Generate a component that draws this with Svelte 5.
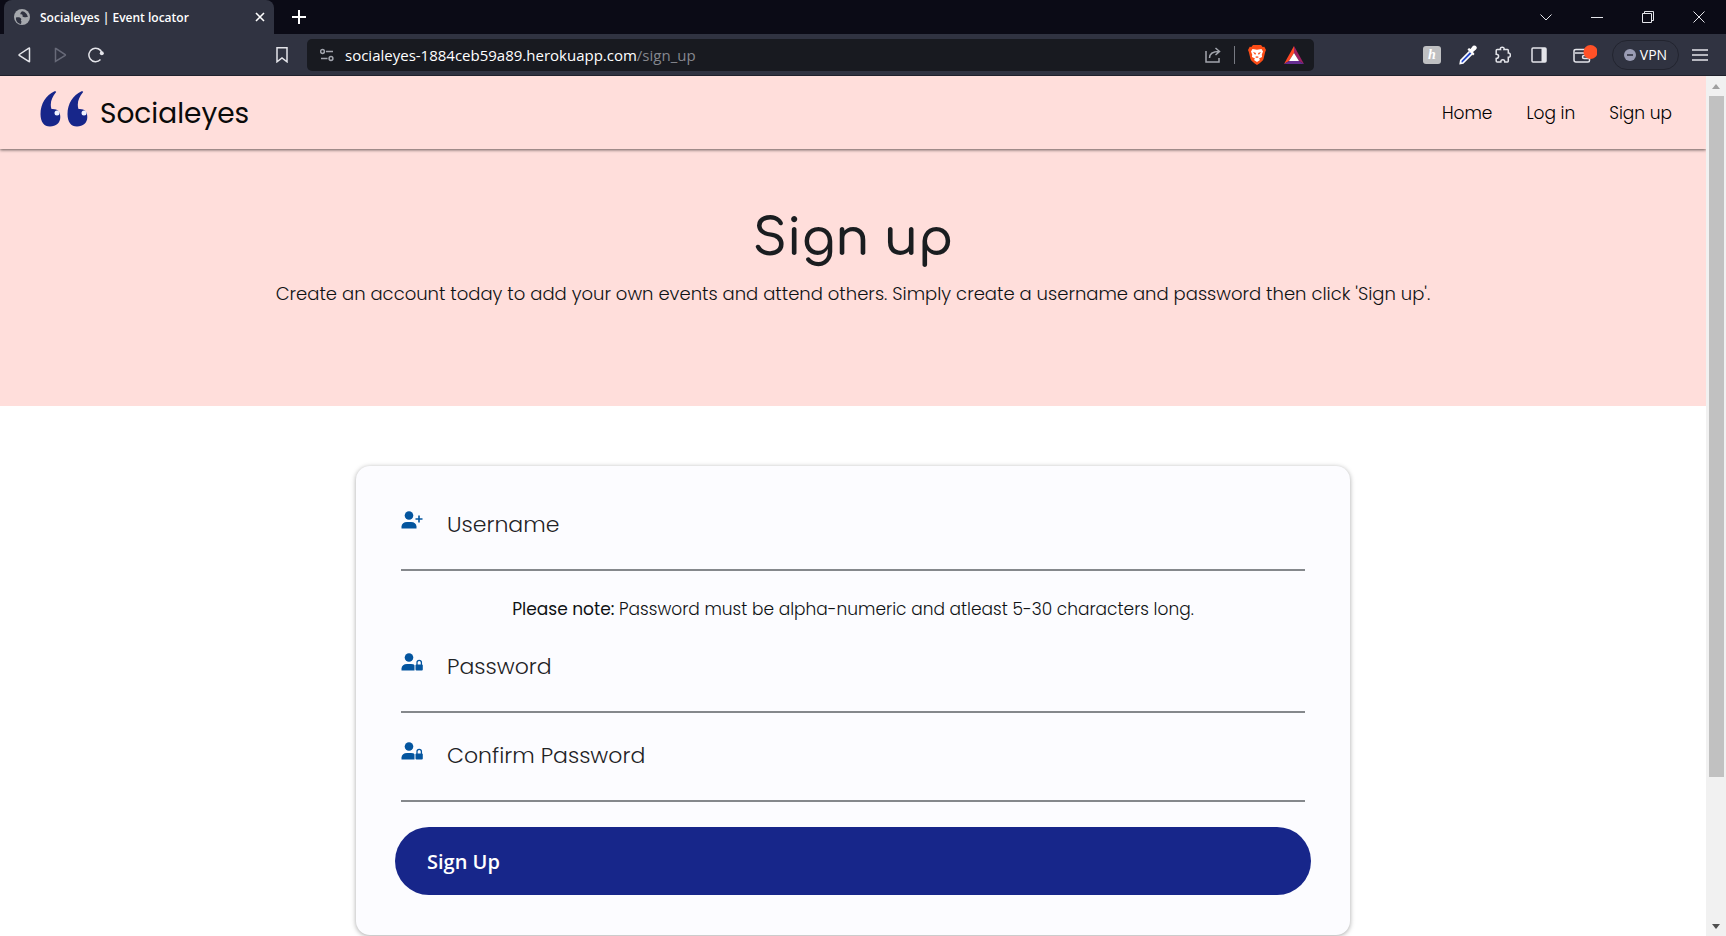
<script>
  const links = ['Home', 'Log in', 'Sign up'];
</script>

<div class="shell">
  <div class="tabs">
    <div class="tab">
      <svg class="globe" viewBox="0 0 16 16" width="16" height="16"><circle cx="8" cy="8" r="8" fill="#a5a8ad" /><path d="M2 8.5C4 8 6 8 7 9.500S6 11 7.500 12.500L7 15C4 14.500 1.500 12 2 8.500ZM8 2.200C7 3.500 6 4 6.500 5.500 8 5 9 6 8.500 7.500 10.500 9 12 7.500 13.800 8 13.500 5 11 2.500 8 2.200Z" fill="#303341" /></svg>
      <span>Socialeyes | Event locator</span>
      <button aria-label="Close tab"><svg viewBox="0 0 10 10" width="10" height="10" stroke="#fff" stroke-width="1.600"><path d="M1 1l8 8M9 1l-8 8" /></svg></button>
    </div>
    <button class="plus" aria-label="New tab"><svg viewBox="0 0 14 14" width="14" height="14" stroke="#fff" stroke-width="2"><path d="M7 0v14M0 7h14" /></svg></button>
    <div class="window">
      <button aria-label="Search tabs"><svg viewBox="0 0 12 12" width="12" height="12"><path d="M.5 3.500 6 9l5.500-5.500" /></svg></button>
      <button aria-label="Minimize"><svg viewBox="0 0 12 12" width="12" height="12"><path d="M0 6.500h12" /></svg></button>
      <button aria-label="Restore"><svg viewBox="0 0 12 12" width="12" height="12"><path d="M.5 2.500h9v9h-9zM2.500 2.500v-2h9v9h-2" /></svg></button>
      <button aria-label="Close window"><svg viewBox="0 0 12 12" width="12" height="12"><path d="M.5.5l11 11M11.500.5l-11 11" /></svg></button>
    </div>
  </div>

  <div class="toolbar">
    <div class="nav">
      <button aria-label="Back"><svg viewBox="0 0 16 16" width="16" height="16"><path d="M13.500 1.500v13Q13.500 15 13 14.500L3.300 8.500Q2.800 8 3.300 7.500L12.500 1.300Q13.500 .8 13.500 1.500Z" /></svg></button>
      <button aria-label="Forward" class="dim"><svg viewBox="0 0 16 16" width="16" height="16"><path d="M3.500 1.500v13L13.200 8.500Q13.700 8 13.200 7.500L4 1.500Z" /></svg></button>
      <button aria-label="Reload"><svg viewBox="0 0 16 16" width="16" height="16"><path d="M12.500 12.500A6.700 6.700 0 1 1 14 6" /><circle cx="13.800" cy="6.300" r="2" fill="#e4e5ea" stroke="none" /></svg></button>
    </div>
    <button class="mark" aria-label="Bookmark"><svg viewBox="0 0 14 16" width="14" height="16"><path d="M2 .8h10v14L7 11 2 14.800Z" /></svg></button>
    <div class="address">
      <svg class="site" viewBox="0 0 14 14" width="14" height="14"><circle cx="2.500" cy="3.500" r="1.900" /><path d="M6 3.500h7M1 10.500h6.500" /><circle cx="11" cy="10.500" r="1.900" /></svg>
      <span class="url"><b>socialeyes-1884ceb59a89.herokuapp.com</b>/sign_up</span>
      <button class="share" aria-label="Share"><svg viewBox="0 0 16 16" width="16" height="16"><path d="M1 4v11h13v-4M4.500 11C4.500 6 8 4.500 14 4.500M10.500 1l4 3.500-4 3.500" /></svg></button>
      <i class="bar"></i>
      <button aria-label="Shields"><svg class="plain" viewBox="0 0 18 20" width="18" height="20"><path d="M5 0h8l1.700 2 1.600-.2L18 5l-.8 2L15.500 14Q15 16 9 20 3 16 2.500 14L.8 7 0 5 1.700 1.800 3.300 2Z" fill="#fb4c16" /><path d="M4.500 4 9 4.700 13.500 4 15 6.500l-1.200 3L14 12l-3 1.500 1 1.500-3 2-3-2 1-1.500L4 12l.2-2.500L3 6.500Z" fill="#fff" /><path d="M5 7l3 1-.8 2ZM13 7l-3 1 .8 2ZM7 12l2-.8 2 .8-2 1Z" fill="#fb4c16" /></svg></button>
      <button class="bat" aria-label="Rewards"><svg class="plain" viewBox="0 0 20 18" width="20" height="18"><path d="M10 0 0 18l5-3 5-8Z" fill="#ff4724" /><path d="M10 0l10 18-5-3-5-8Z" fill="#9e1f63" /><path d="M0 18h20l-5-3H5Z" fill="#662d91" /><path d="M10 7l5 8H5Z" fill="#fff" /></svg></button>
    </div>
    <div class="extensions">
      <button class="honey" aria-label="Honey">h</button>
      <button aria-label="Color picker"><svg class="plain" viewBox="0 0 18 20" width="18" height="20"><path d="M10.500 6.500 1.800 15.500 1.300 18.500 4 18 13 9" fill="#2448c8" stroke="#fff" stroke-width="1.700" /><path d="M8.500 4.500 10 3l1.500 1L14 .8q2-1 3.300.6 1.200 1.700-.3 3.100L14 7l1.500 2L14 10.500Z" fill="#fff" /></svg></button>
      <button class="puzzle" aria-label="Extensions"><svg viewBox="0 0 16 18" width="16" height="18"><path d="M3.500 3.500H5.500C5 1.800 6 1.300 7.200 1.300S9.500 1.800 9 3.500H12.500Q13.300 3.500 13.300 4.500V7C15 6.800 15.300 8 15.300 9.200S15 11.300 13.300 11.200V15Q13.300 16 12.500 16H9.800C9.800 14.500 8.800 13.800 7.800 13.800S5.800 14.500 5.800 16H2.200Q1.200 16 1.200 15V12.500C3 12.500 3.600 11.500 3.600 10.300S3 8.200 1.200 8.200V4.500Q1.200 3.500 2.200 3.500Z" /></svg></button>
      <button aria-label="Side panel"><svg viewBox="0 0 16 16" width="16" height="16"><rect x="1" y="1" width="14" height="14" rx="1" /><path d="M10.500 1H15v14h-4.500z" fill="#e4e5ea" stroke="none" /></svg></button>
      <button class="wallet" aria-label="Wallet"><svg viewBox="0 0 24 20" width="24" height="20"><path d="M15.500 7V4.500H3Q1 4.500 1 6v9q0 2 2 2h12q1.500 0 1.500-1.500V8H2M16.500 10.500H11Q9.500 10.500 9.500 12T11 13.500h5.500" /><circle cx="17.500" cy="7" r="7" fill="#ff5127" stroke="none" /></svg></button>
      <button class="vpn"><svg class="plain" viewBox="0 0 12 12" width="12" height="12"><circle cx="6" cy="6" r="6" fill="#9a9cb4" /><path d="M3 6h6" stroke="#303341" stroke-width="1.600" /></svg>VPN</button>
      <button class="menu" aria-label="Menu"><svg viewBox="0 0 16 14" width="16" height="14"><path d="M0 2h16M0 7h16M0 12h16" /></svg></button>
    </div>
  </div>

  <div class="viewport">
    <div class="page">
      <header>
        <a class="brand" href="#home">
          <svg viewBox="0 0 48 36" width="48" height="36">
            {#each [0, 27] as x}
              <g transform="translate({x})"><path d="M14.500 .3C6 4 .5 13 .5 23 .5 31 4 35.500 10 35.500 16 35.500 20.300 32 20.300 26 20.300 20.500 17.500 17.500 11.500 18 9.500 12 12 6 15.800 1.500Q16.800 -.3 14.500 .3Z" fill="#17268a" /><circle cx="17" cy="22" r="2.500" fill="#f0f2ff" /></g>
            {/each}
          </svg>
          <span>Socialeyes</span>
        </a>
        <nav>
          {#each links as link}<a href="#{link}">{link}</a>{/each}
        </nav>
      </header>
      <section class="hero">
        <h1>Sign up</h1>
        <p>Create an account today to add your own events and attend others. Simply create a username and password then click 'Sign up'.</p>
      </section>
      <main>
        <form onsubmit={(e) => e.preventDefault()}>
          {#snippet field(id, label, type)}
            <div class="field">
              <svg viewBox="0 0 22 18" width="22" height="18" fill="#04559f">
                <circle cx="8" cy="4.500" r="4.300" />
                <path d="M.5 17.500V15.500Q1 11 6 11h4q5 0 5.500 4.500v2Z" />
                {#if type === 'text'}
                  <path d="M17.200 4.500h1.600v2.700h2.700v1.600h-2.700v2.700h-1.600V8.800h-2.700V7.200h2.700Z" />
                {:else}
                  <path d="M13.500 11h9v7h-9z" fill="#fcfcff" />
                  <rect x="14.500" y="11.500" width="7.300" height="6" rx="1" />
                  <path d="M16 12V9.500a2.200 2.200 0 0 1 4.400 0V12" fill="none" stroke="#04559f" stroke-width="1.300" />
                {/if}
              </svg>
              <label for={id}>{label}</label>
              <input {id} {type} />
            </div>
          {/snippet}
          {@render field('username', 'Username', 'text')}
          <p class="note"><strong>Please note:</strong> Password must be alpha-numeric and atleast 5-30 characters long.</p>
          {@render field('password', 'Password', 'password')}
          {@render field('confirm', 'Confirm Password', 'password')}
          <button class="submit">Sign Up</button>
        </form>
      </main>
    </div>
    <div class="scroll" aria-hidden="true">
      <svg viewBox="0 0 8 5" width="8" height="5"><path d="M0 5 4 0l4 5Z" fill="#a0a0a0" /></svg>
      <i></i>
      <svg viewBox="0 0 8 5" width="8" height="5"><path d="M0 0l4 5 4-5Z" fill="#505050" /></svg>
    </div>
  </div>
</div>

<style>
  :global(body) { margin: 0; }
  * { box-sizing: border-box; }
  button { font: inherit; color: inherit; background: none; border: 0; padding: 0; display: flex; align-items: center; justify-content: center; }
  a { color: inherit; text-decoration: none; }
  svg { flex: none; }
  .shell { height: 100vh; display: flex; flex-direction: column; overflow: hidden; font-family: Poppins, Inter, sans-serif; font-weight: 300; color: #0f1214; }

  .tabs { height: 34px; flex: none; display: flex; background: #0b0b16; color: #fff; }
  .tab { width: 270px; margin-left: 4px; padding: 0 9px 0 10px; display: flex; align-items: center; gap: 10px; background: #303341; border-radius: 8px 8px 0 0; font: 600 12px "Segoe UI", "Open Sans", sans-serif; }
  .tab span { flex: 1; white-space: nowrap; }
  .plus { margin-left: 18px; }
  .window { margin-left: auto; margin-right: 21px; display: flex; gap: 39px; }
  .window svg { fill: none; stroke: #e4e5ea; stroke-width: 1; }

  .toolbar { height: 42px; flex: none; display: flex; align-items: center; background: #303341; border-bottom: 1px solid #1f212c; padding: 0 18px 0 16px; }
  .toolbar svg:not(.plain) { fill: none; stroke: #e4e5ea; stroke-width: 1.500; }
  .toolbar .dim svg:not(.plain) { stroke: #676a78; }
  .nav { display: flex; gap: 20px; width: 259px; }
  .address { flex: 0 1 1007px; margin-left: 18px; height: 32px; padding: 0 10px 0 13px; display: flex; align-items: center; background: #181a20; border-radius: 5px; }
  .toolbar .address .site, .toolbar .share svg:not(.plain) { stroke: #a2a5ad; }
  .url { margin-left: 11px; flex: 1; font: 15px "Segoe UI", "Open Sans", sans-serif; color: #85878e; white-space: nowrap; }
  .url b { font-weight: 400; color: #fff; }
  .bar { width: 1px; height: 18px; margin: 0 13px; background: #777a82; }
  .bat { margin-left: 18px; }
  .extensions { margin-left: auto; display: flex; align-items: center; gap: 18px; color: #fff; }
  .honey { width: 18px; height: 18px; border-radius: 3px; background: #bfc0c2; font: italic 700 14px "Liberation Serif", serif; }
  .puzzle { margin-right: 2px; }
  .wallet { margin-left: 8px; margin-right: -3px; }
  .vpn { width: 67px; height: 30px; border: 1px solid #22242f; border-radius: 15px; gap: 4px; font: 14px "Segoe UI", "Open Sans", sans-serif; }
  .menu { margin-left: -5px; }

  .viewport { flex: 1; min-height: 0; display: flex; }
  .page { flex: 1; min-width: 0; overflow: hidden; background: #fff; }
  header { position: relative; height: 73px; padding: 0 34px 0 40px; display: flex; align-items: center; justify-content: space-between; background: #ffdedb; box-shadow: 0 1px 3px rgba(0, 0, 0, .6); }
  .brand { display: flex; align-items: center; gap: 12px; font-size: 28px; line-height: 40px; font-weight: 400; color: #0a0a0a; }
  .brand svg { margin-bottom: 8px; }
  .brand span { padding-top: 2px; }
  nav { display: flex; gap: 34px; font-size: 17px; color: #000; }
  .hero { height: 257px; padding-top: 58px; background: #ffdedb; text-align: center; }
  h1 { margin: 0; font: 600 50px/64px Comfortaa, Quicksand, Inter, sans-serif; color: #1a1d20; }
  .hero p { margin: 10px 0 0; font-size: 18px; line-height: 26px; }
  main { padding: 60px 356px 0; }
  form { height: 469px; padding: 38px 45px 0; background: #fcfcff; border-radius: 14px; box-shadow: 0 1px 5px rgba(0, 0, 0, .35); }
  .field { height: 67px; display: flex; align-items: flex-start; border-bottom: 2px solid #85888c; }
  .field svg { margin-top: 7px; }
  label { margin: 7px 0 0 24px; font-size: 22px; line-height: 28px; color: #1f2326; }
  input { flex: 1; min-width: 0; height: 48px; border: 0; outline: 0; background: none; font-size: 22px; }
  .note { margin: 25px 0 24px; text-align: center; font-size: 17px; line-height: 26px; }
  .note strong { font-weight: 400; }
  .field + .field { margin-top: 22px; }
  .submit { width: calc(100% + 12px); height: 68px; margin: 25px -6px 0; padding: 0 32px; justify-content: flex-start; background: #17268a; color: #fff; border-radius: 34px; font: 600 20px "Segoe UI", "Open Sans", sans-serif; }
  .scroll { width: 20px; flex: none; display: flex; flex-direction: column; align-items: center; padding: 8px 0 7px; background: #f1f1f1; }
  .scroll i { width: 15px; flex: 0 1 681px; margin: 7px 0 auto; background: #c1c1c1; }
</style>
